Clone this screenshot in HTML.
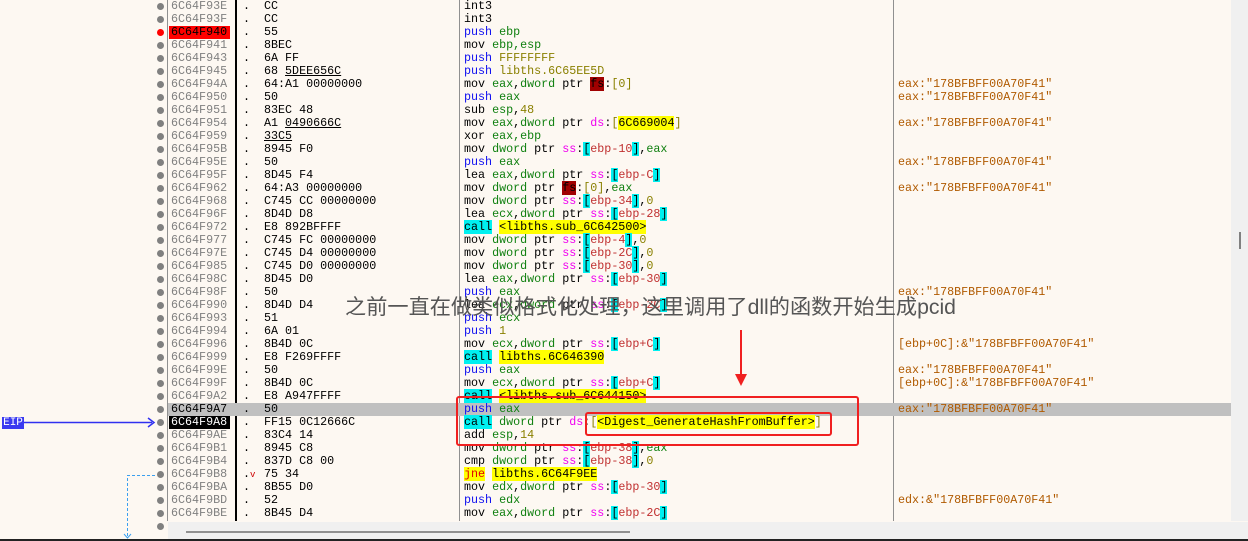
<!DOCTYPE html>
<html><head><meta charset="utf-8"><style>
body{margin:0;width:1248px;height:541px;overflow:hidden;background:#fdf8f2;position:relative;font-family:"Liberation Mono",monospace;font-size:11.7px;}
.r{position:absolute;left:0;height:13px;line-height:13px;white-space:pre;}
.ad{position:absolute;left:171px;color:#808080;}
.dot{position:absolute;left:157px;top:3px;width:7px;height:7px;border-radius:50%;background:#808080;}
.dt{position:absolute;left:243px;}
.by{position:absolute;left:264px;color:#000;}
.as{position:absolute;left:464px;color:#000;}
.cm{position:absolute;left:898px;color:#b05a00;}
.p{color:#1010f0}.g{color:#108010}.n{color:#8a8000}.s{color:#f000f0}.b{background:#00f0f0}.x{color:#c03030}.c{background:#00f0f0}.y{background:#ffff00}.u{text-decoration:underline}.fs{background:#a00000}
.v{position:absolute;top:0;width:1px;height:521px;}
</style></head><body>
<div class="v" style="left:167px;background:#909090"></div>
<div class="v" style="left:235px;width:2px;background:#000"></div>
<div class="v" style="left:459px;background:#909090"></div>
<div class="v" style="left:893px;background:#909090"></div>
<div style="position:absolute;left:1231px;top:0;width:17px;height:521px;background:#f0f0f0"></div>
<div style="position:absolute;left:1239px;top:232px;width:2px;height:17px;background:#808080"></div>
<div style="position:absolute;left:168px;top:403px;width:1063px;height:13px;background:#c0c0c0"></div>

<div class="r" style="top:0"><i class="dot"></i><span class="ad">6C64F93E</span><span class="dt">.</span><span class="by">CC</span><span class="as">int3</span></div>
<div class="r" style="top:13px"><i class="dot"></i><span class="ad">6C64F93F</span><span class="dt">.</span><span class="by">CC</span><span class="as">int3</span></div>
<div class="r" style="top:26px"><i class="dot" style="background:#f00"></i><span class="ad" style="background:#f00;color:#000;width:59px;left:169px;padding-left:2px">6C64F940</span><span class="dt">.</span><span class="by">55</span><span class="as"><span class="p">push</span> <span class="g">ebp</span></span></div>
<div class="r" style="top:39px"><i class="dot"></i><span class="ad">6C64F941</span><span class="dt">.</span><span class="by">8BEC</span><span class="as">mov <span class="g">ebp,esp</span></span></div>
<div class="r" style="top:52px"><i class="dot"></i><span class="ad">6C64F943</span><span class="dt">.</span><span class="by">6A FF</span><span class="as"><span class="p">push</span> <span class="n">FFFFFFFF</span></span></div>
<div class="r" style="top:65px"><i class="dot"></i><span class="ad">6C64F945</span><span class="dt">.</span><span class="by">68 <span class="u">5DEE656C</span></span><span class="as"><span class="p">push</span> <span class="n">libths.6C65EE5D</span></span></div>
<div class="r" style="top:78px"><i class="dot"></i><span class="ad">6C64F94A</span><span class="dt">.</span><span class="by">64:A1 00000000</span><span class="as">mov <span class="g">eax</span>,<span class="g">dword</span> ptr <span class="fs">fs</span>:<span class="n">[0]</span></span><span class="cm">eax:"178BFBFF00A70F41"</span></div>
<div class="r" style="top:91px"><i class="dot"></i><span class="ad">6C64F950</span><span class="dt">.</span><span class="by">50</span><span class="as"><span class="p">push</span> <span class="g">eax</span></span><span class="cm">eax:"178BFBFF00A70F41"</span></div>
<div class="r" style="top:104px"><i class="dot"></i><span class="ad">6C64F951</span><span class="dt">.</span><span class="by">83EC 48</span><span class="as">sub <span class="g">esp</span>,<span class="n">48</span></span></div>
<div class="r" style="top:117px"><i class="dot"></i><span class="ad">6C64F954</span><span class="dt">.</span><span class="by">A1 <span class="u">0490666C</span></span><span class="as">mov <span class="g">eax</span>,<span class="g">dword</span> ptr <span class="s">ds</span>:<span class="n">[</span><span class="y">6C669004</span><span class="n">]</span></span><span class="cm">eax:"178BFBFF00A70F41"</span></div>
<div class="r" style="top:130px"><i class="dot"></i><span class="ad">6C64F959</span><span class="dt">.</span><span class="by"><span class="u">33C5</span></span><span class="as">xor <span class="g">eax,ebp</span></span></div>
<div class="r" style="top:143px"><i class="dot"></i><span class="ad">6C64F95B</span><span class="dt">.</span><span class="by">8945 F0</span><span class="as">mov <span class="g">dword</span> ptr <span class="s">ss</span>:<span class="b">[</span><span class="x">ebp-10</span><span class="b">]</span>,<span class="g">eax</span></span></div>
<div class="r" style="top:156px"><i class="dot"></i><span class="ad">6C64F95E</span><span class="dt">.</span><span class="by">50</span><span class="as"><span class="p">push</span> <span class="g">eax</span></span><span class="cm">eax:"178BFBFF00A70F41"</span></div>
<div class="r" style="top:169px"><i class="dot"></i><span class="ad">6C64F95F</span><span class="dt">.</span><span class="by">8D45 F4</span><span class="as">lea <span class="g">eax</span>,<span class="g">dword</span> ptr <span class="s">ss</span>:<span class="b">[</span><span class="x">ebp-C</span><span class="b">]</span></span></div>
<div class="r" style="top:182px"><i class="dot"></i><span class="ad">6C64F962</span><span class="dt">.</span><span class="by">64:A3 00000000</span><span class="as">mov <span class="g">dword</span> ptr <span class="fs">fs</span>:<span class="n">[0]</span>,<span class="g">eax</span></span><span class="cm">eax:"178BFBFF00A70F41"</span></div>
<div class="r" style="top:195px"><i class="dot"></i><span class="ad">6C64F968</span><span class="dt">.</span><span class="by">C745 CC 00000000</span><span class="as">mov <span class="g">dword</span> ptr <span class="s">ss</span>:<span class="b">[</span><span class="x">ebp-34</span><span class="b">]</span>,<span class="n">0</span></span></div>
<div class="r" style="top:208px"><i class="dot"></i><span class="ad">6C64F96F</span><span class="dt">.</span><span class="by">8D4D D8</span><span class="as">lea <span class="g">ecx</span>,<span class="g">dword</span> ptr <span class="s">ss</span>:<span class="b">[</span><span class="x">ebp-28</span><span class="b">]</span></span></div>
<div class="r" style="top:221px"><i class="dot"></i><span class="ad">6C64F972</span><span class="dt">.</span><span class="by">E8 892BFFFF</span><span class="as"><span class="c">call</span> <span class="y">&lt;libths.sub_6C642500&gt;</span></span></div>
<div class="r" style="top:234px"><i class="dot"></i><span class="ad">6C64F977</span><span class="dt">.</span><span class="by">C745 FC 00000000</span><span class="as">mov <span class="g">dword</span> ptr <span class="s">ss</span>:<span class="b">[</span><span class="x">ebp-4</span><span class="b">]</span>,<span class="n">0</span></span></div>
<div class="r" style="top:247px"><i class="dot"></i><span class="ad">6C64F97E</span><span class="dt">.</span><span class="by">C745 D4 00000000</span><span class="as">mov <span class="g">dword</span> ptr <span class="s">ss</span>:<span class="b">[</span><span class="x">ebp-2C</span><span class="b">]</span>,<span class="n">0</span></span></div>
<div class="r" style="top:260px"><i class="dot"></i><span class="ad">6C64F985</span><span class="dt">.</span><span class="by">C745 D0 00000000</span><span class="as">mov <span class="g">dword</span> ptr <span class="s">ss</span>:<span class="b">[</span><span class="x">ebp-30</span><span class="b">]</span>,<span class="n">0</span></span></div>
<div class="r" style="top:273px"><i class="dot"></i><span class="ad">6C64F98C</span><span class="dt">.</span><span class="by">8D45 D0</span><span class="as">lea <span class="g">eax</span>,<span class="g">dword</span> ptr <span class="s">ss</span>:<span class="b">[</span><span class="x">ebp-30</span><span class="b">]</span></span></div>
<div class="r" style="top:286px"><i class="dot"></i><span class="ad">6C64F98F</span><span class="dt">.</span><span class="by">50</span><span class="as"><span class="p">push</span> <span class="g">eax</span></span><span class="cm">eax:"178BFBFF00A70F41"</span></div>
<div class="r" style="top:299px"><i class="dot"></i><span class="ad">6C64F990</span><span class="dt">.</span><span class="by">8D4D D4</span><span class="as">lea <span class="g">ecx</span>,<span class="g">dword</span> ptr <span class="s">ss</span>:<span class="b">[</span><span class="x">ebp-2C</span><span class="b">]</span></span></div>
<div class="r" style="top:312px"><i class="dot"></i><span class="ad">6C64F993</span><span class="dt">.</span><span class="by">51</span><span class="as"><span class="p">push</span> <span class="g">ecx</span></span></div>
<div class="r" style="top:325px"><i class="dot"></i><span class="ad">6C64F994</span><span class="dt">.</span><span class="by">6A 01</span><span class="as"><span class="p">push</span> <span class="n">1</span></span></div>
<div class="r" style="top:338px"><i class="dot"></i><span class="ad">6C64F996</span><span class="dt">.</span><span class="by">8B4D 0C</span><span class="as">mov <span class="g">ecx</span>,<span class="g">dword</span> ptr <span class="s">ss</span>:<span class="b">[</span><span class="x">ebp+C</span><span class="b">]</span></span><span class="cm">[ebp+0C]:&amp;"178BFBFF00A70F41"</span></div>
<div class="r" style="top:351px"><i class="dot"></i><span class="ad">6C64F999</span><span class="dt">.</span><span class="by">E8 F269FFFF</span><span class="as"><span class="c">call</span> <span class="y">libths.6C646390</span></span></div>
<div class="r" style="top:364px"><i class="dot"></i><span class="ad">6C64F99E</span><span class="dt">.</span><span class="by">50</span><span class="as"><span class="p">push</span> <span class="g">eax</span></span><span class="cm">eax:"178BFBFF00A70F41"</span></div>
<div class="r" style="top:377px"><i class="dot"></i><span class="ad">6C64F99F</span><span class="dt">.</span><span class="by">8B4D 0C</span><span class="as">mov <span class="g">ecx</span>,<span class="g">dword</span> ptr <span class="s">ss</span>:<span class="b">[</span><span class="x">ebp+C</span><span class="b">]</span></span><span class="cm">[ebp+0C]:&amp;"178BFBFF00A70F41"</span></div>
<div class="r" style="top:390px"><i class="dot"></i><span class="ad">6C64F9A2</span><span class="dt">.</span><span class="by">E8 A947FFFF</span><span class="as"><span class="c">call</span> <span class="y">&lt;libths.sub_6C644150&gt;</span></span></div>
<div class="r" style="top:403px"><i class="dot"></i><span class="ad" style="color:#000">6C64F9A7</span><span class="dt">.</span><span class="by">50</span><span class="as"><span class="p">push</span> <span class="g">eax</span></span><span class="cm">eax:"178BFBFF00A70F41"</span></div>
<div class="r" style="top:416px"><i class="dot"></i><span class="ad" style="background:#000;color:#fff;left:169px;width:59px;padding-left:2px">6C64F9A8</span><span class="dt">.</span><span class="by">FF15 0C12666C</span><span class="as"><span class="c">call</span> <span class="g">dword</span> ptr <span class="s">ds</span>:<span class="n">[</span><span class="y">&lt;Digest_GenerateHashFromBuffer&gt;</span><span class="n">]</span></span></div>
<div class="r" style="top:429px"><i class="dot"></i><span class="ad">6C64F9AE</span><span class="dt">.</span><span class="by">83C4 14</span><span class="as">add <span class="g">esp</span>,<span class="n">14</span></span></div>
<div class="r" style="top:442px"><i class="dot"></i><span class="ad">6C64F9B1</span><span class="dt">.</span><span class="by">8945 C8</span><span class="as">mov <span class="g">dword</span> ptr <span class="s">ss</span>:<span class="b">[</span><span class="x">ebp-38</span><span class="b">]</span>,<span class="g">eax</span></span></div>
<div class="r" style="top:455px"><i class="dot"></i><span class="ad">6C64F9B4</span><span class="dt">.</span><span class="by">837D C8 00</span><span class="as">cmp <span class="g">dword</span> ptr <span class="s">ss</span>:<span class="b">[</span><span class="x">ebp-38</span><span class="b">]</span>,<span class="n">0</span></span></div>
<div class="r" style="top:468px"><i class="dot"></i><span class="ad">6C64F9B8</span><span class="dt">.<span style="color:#c00;font-size:9px">v</span></span><span class="by">75 34</span><span class="as"><span class="y" style="color:#e00000">jne</span> <span class="y">libths.6C64F9EE</span></span></div>
<div class="r" style="top:481px"><i class="dot"></i><span class="ad">6C64F9BA</span><span class="dt">.</span><span class="by">8B55 D0</span><span class="as">mov <span class="g">edx</span>,<span class="g">dword</span> ptr <span class="s">ss</span>:<span class="b">[</span><span class="x">ebp-30</span><span class="b">]</span></span></div>
<div class="r" style="top:494px"><i class="dot"></i><span class="ad">6C64F9BD</span><span class="dt">.</span><span class="by">52</span><span class="as"><span class="p">push</span> <span class="g">edx</span></span><span class="cm">edx:&amp;"178BFBFF00A70F41"</span></div>
<div class="r" style="top:507px"><i class="dot"></i><span class="ad">6C64F9BE</span><span class="dt">.</span><span class="by">8B45 D4</span><span class="as">mov <span class="g">eax</span>,<span class="g">dword</span> ptr <span class="s">ss</span>:<span class="b">[</span><span class="x">ebp-2C</span><span class="b">]</span></span></div>
<div class="r" style="top:520px"><i class="dot"></i></div>

<div style="position:absolute;left:168px;top:522px;width:1080px;height:19px;background:#f0f0f0"></div>
<div style="position:absolute;left:186px;top:531px;width:444px;height:2px;background:#909090"></div>
<div style="position:absolute;left:0;top:539px;width:1248px;height:2px;background:#222"></div>

<div style="position:absolute;left:2px;top:417px;width:22px;height:12px;background:#3a3af0;color:#fff;font-size:11px;line-height:12px;text-align:center">EIP</div>
<svg style="position:absolute;left:0;top:0" width="1248" height="541">
<line x1="24" y1="422.5" x2="152" y2="422.5" stroke="#3030f0" stroke-width="1.5"/>
<path d="M148 418 L154 422.5 L148 427" fill="none" stroke="#3030f0" stroke-width="1.5"/>
<path d="M155 475.5 H127.5 V537" fill="none" stroke="#3aa0f0" stroke-dasharray="3,2"/>
<path d="M124 534 L127.5 538 L131 534" fill="none" stroke="#3aa0f0"/>
<rect x="457" y="397" width="401" height="48" rx="2" fill="none" stroke="#f02020" stroke-width="2"/>
<rect x="586" y="413" width="245" height="22" rx="2" fill="none" stroke="#f02020" stroke-width="2"/>
<line x1="741" y1="330" x2="741" y2="376" stroke="#f02020" stroke-width="2"/>
<path d="M735 374 L747 374 L741 386 Z" fill="#f02020"/>
</svg>
<div style="position:absolute;left:345px;top:296px;font-family:'Liberation Sans','Noto Sans CJK SC',sans-serif;font-size:21.2px;line-height:24px;color:#555;white-space:nowrap">之前一直在做类似格式化处理，这里调用了dll的函数开始生成pcid</div>
</body></html>
